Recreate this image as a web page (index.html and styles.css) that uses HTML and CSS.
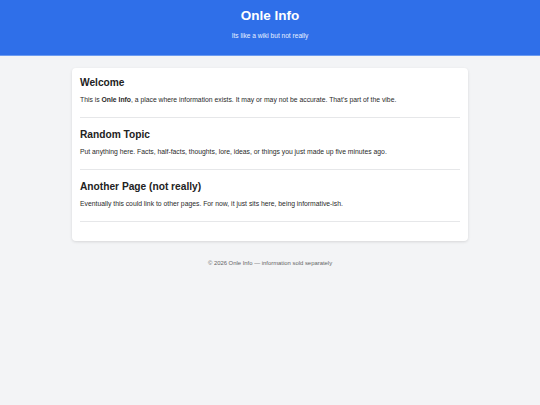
FILE: index.html
```html
<!DOCTYPE html>
<html lang="en">
<head>
<meta charset="utf-8">
<title>Onle Info</title>
<link rel="stylesheet" href="styles.css">
</head>
<body>
<header class="site-header">
  <h1 class="site-title">Onle Info</h1>
  <p class="site-tagline">Its like a wiki but not really</p>
</header>
<main class="card">
  <section class="entry">
    <h2 class="entry-title">Welcome</h2>
    <p class="entry-text">This is <strong>Onle Info</strong>, a place where information exists. It may or may not be accurate. That’s part of the vibe.</p>
  </section>
  <section class="entry">
    <h2 class="entry-title">Random Topic</h2>
    <p class="entry-text">Put anything here. Facts, half-facts, thoughts, lore, ideas, or things you just made up five minutes ago.</p>
  </section>
  <section class="entry">
    <h2 class="entry-title">Another Page (not really)</h2>
    <p class="entry-text">Eventually this could link to other pages. For now, it just sits here, being informative-ish.</p>
  </section>
</main>
<footer class="site-footer">© 2026 Onle Info — information sold separately</footer>
</body>
</html>
```
FILE: styles.css
```css
html, body {
  margin: 0;
  padding: 0;
}
body {
  background: #f3f4f6;
  font-family: "Liberation Sans", Arial, sans-serif;
  color: #222;
  height: 405px;
}
.site-header {
  background: #2f6fe9;
  color: #fff;
  text-align: center;
  height: 56px;
  box-sizing: border-box;
  padding-top: 8px;
  border-bottom: 1px solid #6c9bf0;
}
.site-title {
  margin: 0;
  font-size: 13.5px;
  line-height: 16px;
  font-weight: bold;
}
.site-tagline {
  margin: 8px 0 0;
  font-size: 6.6px;
  line-height: 8px;
  color: #e8efff;
}
.card {
  display: block;
  width: 396px;
  box-sizing: border-box;
  margin: 12px auto 0;
  background: #fff;
  border-radius: 4px;
  box-shadow: 0 1px 3px rgba(0,0,0,0.12);
  padding: 8px 8px 9px;
}
.entry {
  padding-bottom: 13px;
  border-bottom: 1px solid #e6e7e9;
  margin-bottom: 10px;
}
.entry:last-child {
  margin-bottom: 10px;
}
.entry-title {
  margin: 0;
  font-size: 10.2px;
  line-height: 13px;
  font-weight: bold;
  color: #222;
}
.entry-text {
  margin: 7px 0 0;
  font-size: 6.8px;
  line-height: 8px;
  color: #2a2a2a;
}
.site-footer {
  text-align: center;
  font-size: 5.9px;
  line-height: 8px;
  color: #666;
  margin-top: 18px;
}
```
